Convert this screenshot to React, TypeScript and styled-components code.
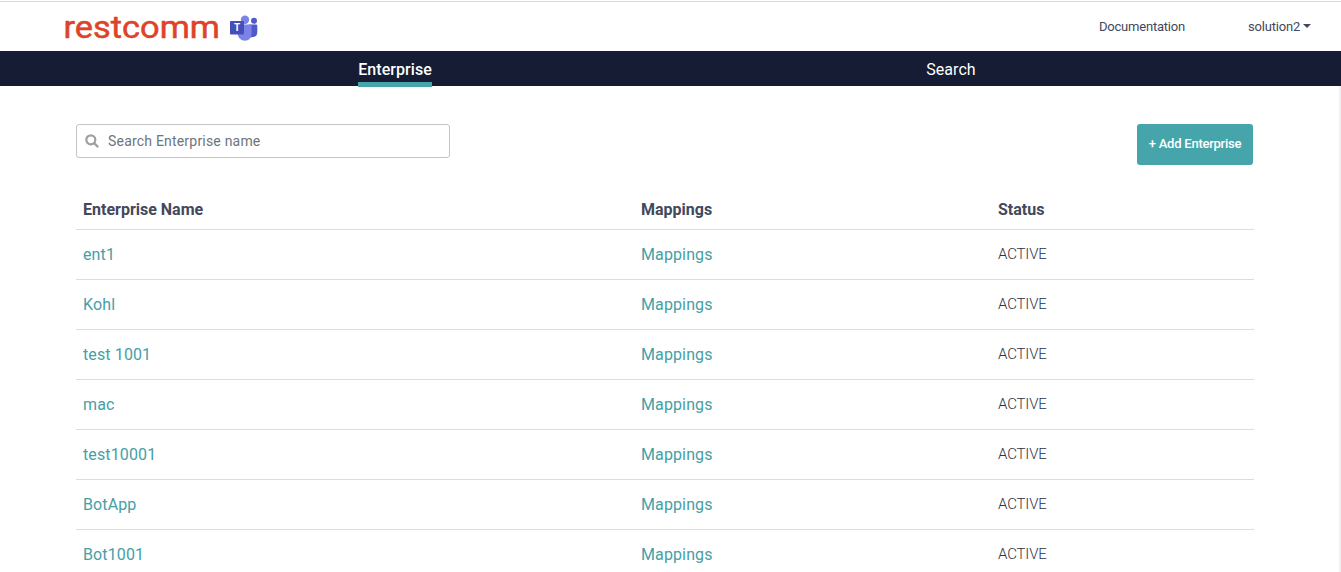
import React from "react";
import styled, { createGlobalStyle } from "styled-components";

const GlobalStyle = createGlobalStyle`
  * { box-sizing: border-box; }
  body { margin: 0; background: #fff; color: #43485c; font-family: Roboto, sans-serif; overflow: hidden; }
`;
const Page = styled.div`
  height: 572px;
  overflow: hidden;
  display: flex;
  flex-direction: column;
  border-top: 1px solid #fff;
`;
const Header = styled.header`
  height: 50px;
  flex: none;
  display: flex;
  justify-content: space-between;
  align-items: flex-start;
  border-top: 1px solid #dadcdc;
  padding: 0 30px 0 64px;
`;
const Brand = styled.div`
  display: flex;
  align-items: flex-start;
`;
const Wordmark = styled.svg`
  display: block;
  width: 158px;
  height: 48px;
  text { font: 400 32px Roboto, sans-serif; fill: #de4328; stroke: #de4328; stroke-width: 0.5px; }
`;
const TeamsIcon = styled.svg`
  display: block;
  width: 30px;
  height: 26px;
  margin: 13px 0 0 7px;
  text { font: 700 10px Roboto, sans-serif; fill: #fff; }
`;
const Links = styled.nav`
  display: flex;
  gap: 63px;
  padding-top: 16px;
  font-size: 13px;
  line-height: 18px;
  letter-spacing: -0.2px;
`;
const HeaderLink = styled.a`
  display: flex;
  align-items: center;
`;
const Caret = styled.span`
  margin: -2px 0 0 3px;
  border: 4px solid transparent;
  border-top-color: #43485c;
  border-bottom: 0;
`;
const Tabs = styled.nav`
  height: 35px;
  flex: none;
  display: flex;
  background: #151c33;
  padding: 0 112px 0 117px;
`;
const TabCell = styled.div`
  flex: 1;
  display: flex;
  justify-content: center;
`;
const Tab = styled.a<{ $active?: boolean }>`
  height: 36px;
  padding-top: 8px;
  color: #fff;
  font-size: 16px;
  font-weight: ${(p) => (p.$active ? 500 : 400)};
  letter-spacing: 0.06px;
  line-height: 21px;
  border-bottom: 5px solid ${(p) => (p.$active ? "#45a5ab" : "transparent")};
`;
const Content = styled.main`
  flex: 1;
  min-height: 0;
  padding: 38px 85px 0 76px;
  border-right: 2px solid #f1f1f1;
`;
const Toolbar = styled.div`
  display: flex;
  justify-content: space-between;
  align-items: flex-start;
  padding-right: 1px;
  height: 66px;
`;
const SearchBox = styled.label`
  width: 374px;
  height: 34px;
  display: flex;
  align-items: center;
  gap: 9px;
  padding: 0 8px;
  border: 1px solid #c4c4c4;
  border-radius: 3px;
  svg { display: block; flex: none; margin-top: -1px; }
`;
const SearchInput = styled.input`
  flex: 1;
  border: 0;
  padding: 0;
  outline: 0;
  background: none;
  font: 400 14px Roboto, sans-serif;
  letter-spacing: 0.2px;
  &::placeholder { color: #6c757d; opacity: 1; }
`;
const AddButton = styled.button`
  width: 116px;
  height: 41px;
  padding: 0 0 2px;
  border: 0;
  border-radius: 3px;
  background: #45a5ab;
  color: #fff;
  font: 500 13px Roboto, sans-serif;
  letter-spacing: -0.24px;
`;
const Row = styled.div<{ $head?: boolean }>`
  display: grid;
  grid-template-columns: 558px 357px 1fr;
  height: ${(p) => (p.$head ? 40 : 50)}px;
  padding: 0 7px;
  align-items: center;
  border-bottom: 1px solid #dcdddf;
`;
const HeadCell = styled.div`
  font-size: 16px;
  font-weight: 700;
`;
const LinkCell = styled.a`
  font-size: 16px;
  letter-spacing: 0.12px;
  color: #45a0a6;
`;
const StatusCell = styled.div`
  padding-bottom: 2px;
  color: #2c3348;
  font-size: 15px;
  font-weight: 300;
  letter-spacing: -0.15px;
`;

const enterprises = ["ent1", "Kohl", "test 1001", "mac", "test10001", "BotApp", "Bot1001"];

export default function App() {
  return (
    <Page>
      <GlobalStyle />
      <Header>
        <Brand>
          <Wordmark viewBox="0 0 158 48">
            <text x="-0.500" y="35.700" textLength="156.500" lengthAdjust="spacingAndGlyphs">restcomm</text>
          </Wordmark>
          <TeamsIcon viewBox="0 0 30 26">
            <path d="M20 9.500h7q1.300 0 1.300 1.300v6q0 5.500-5.500 5.500H19z" fill="#5059c9" />
            <circle cx="25" cy="5.800" r="3" fill="#5059c9" />
            <circle cx="16" cy="4.700" r="4.200" fill="#7b83eb" />
            <path d="M9 9.500h12.500q1 0 1 1v8q0 7-7 7.200Q9 25 8.500 18z" fill="#7b83eb" />
            <rect x="1" y="6" width="14" height="13.500" rx="1" fill="#464eb8" />
            <text x="8" y="16.300" textAnchor="middle">T</text>
          </TeamsIcon>
        </Brand>
        <Links>
          <HeaderLink>Documentation</HeaderLink>
          <HeaderLink>solution2<Caret /></HeaderLink>
        </Links>
      </Header>
      <Tabs>
        <TabCell><Tab $active>Enterprise</Tab></TabCell>
        <TabCell><Tab>Search</Tab></TabCell>
      </Tabs>
      <Content>
        <Toolbar>
          <SearchBox>
            <svg width="14" height="14" viewBox="0 0 14 14" fill="none" stroke="#a0a0a0" strokeWidth="2.200">
              <circle cx="5.800" cy="5.800" r="4.500" />
              <path d="M9.200 9.200L12.500 12.500" strokeWidth="2.400" strokeLinecap="round" />
            </svg>
            <SearchInput placeholder="Search Enterprise name" />
          </SearchBox>
          <AddButton>+ Add Enterprise</AddButton>
        </Toolbar>
        <Row $head>
          <HeadCell>Enterprise Name</HeadCell>
          <HeadCell>Mappings</HeadCell>
          <HeadCell>Status</HeadCell>
        </Row>
        {enterprises.map((name) => (
          <Row key={name}>
            <LinkCell>{name}</LinkCell>
            <LinkCell>Mappings</LinkCell>
            <StatusCell>ACTIVE</StatusCell>
          </Row>
        ))}
      </Content>
    </Page>
  );
}
